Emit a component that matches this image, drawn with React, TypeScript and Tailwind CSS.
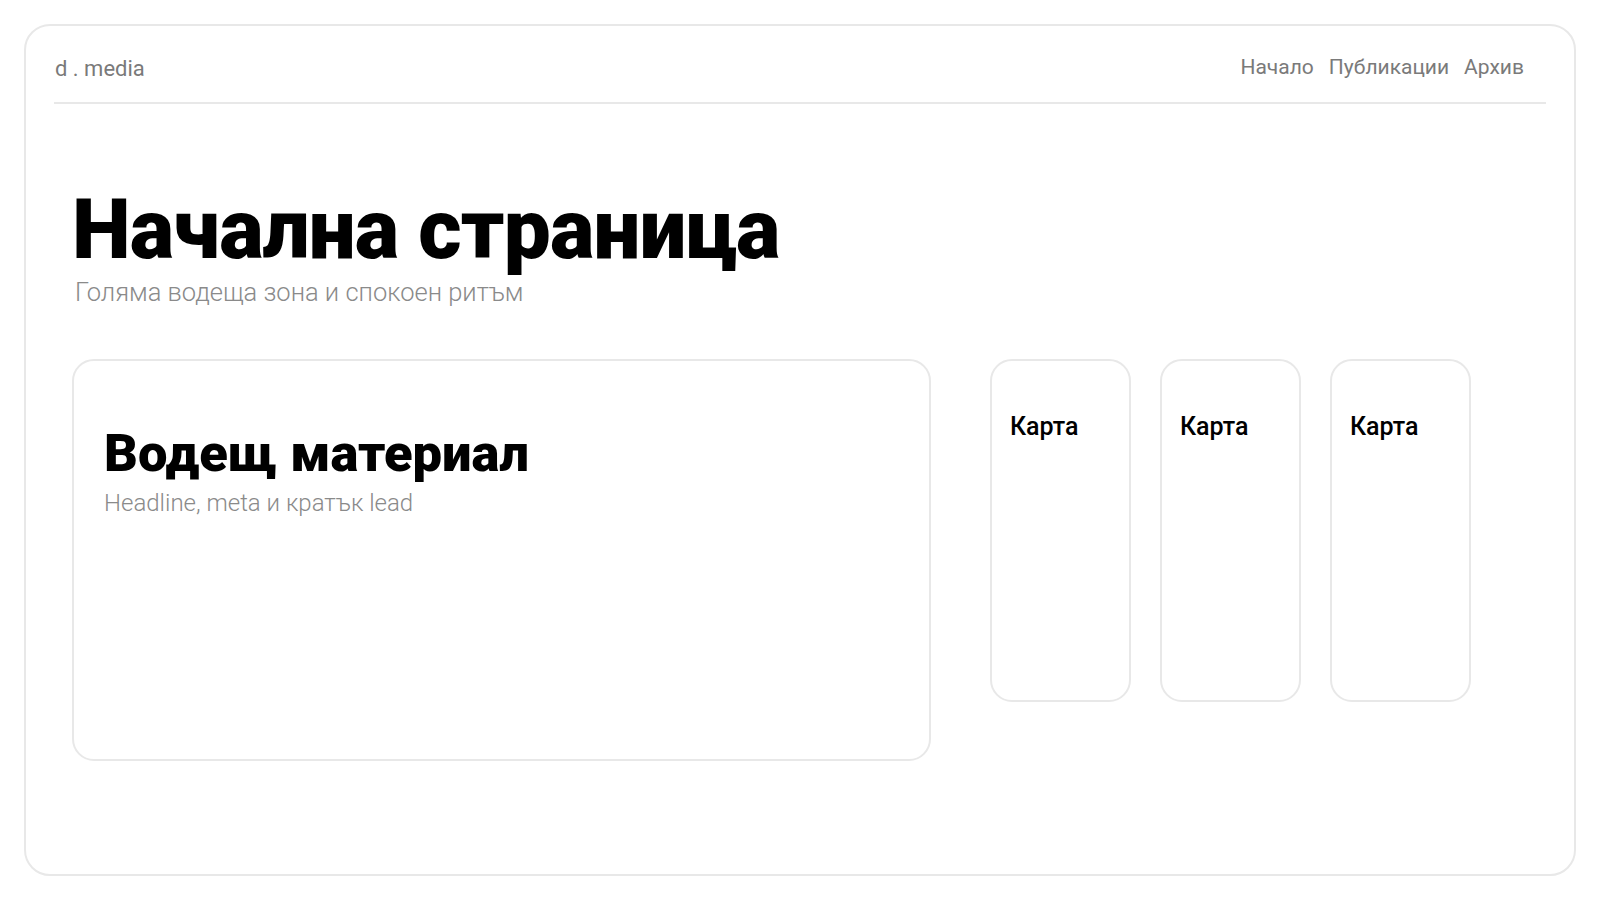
import React from 'react';

const App: React.FC = () => {
  const navItems = ['Начало', 'Публикации', 'Архив'];
  const cards = ['Карта', 'Карта', 'Карта'];

  return (
    <div className="w-full h-[900px] bg-white p-6 font-['Roboto','Noto_Sans',sans-serif]">
      <div className="h-full w-full rounded-[26px] border-2 border-[#e8e8e8] px-[28px] flex flex-col">
        {/* header */}
        <header className="h-[78px] pt-[8px] flex items-center justify-between border-b-2 border-[#e8e8e8] pr-[22px]">
          <div className="pl-px text-[22px] text-[#7a7a7a]">d . media</div>
          <nav className="flex gap-[15px] text-[21px] text-[#7a7a7a]">
            {navItems.map((item) => (
              <a key={item} href="#" className="hover:text-black">
                {item}
              </a>
            ))}
          </nav>
        </header>

        {/* hero */}
        <main className="px-[18px] pt-[84px]">
          <h1 className="text-[83.5px] leading-[84px] font-black text-black tracking-[-0.01em]">Начална страница</h1>
          <p className="mt-[5px] pl-[3px] text-[25.5px] leading-[30px] text-[#8a8a8a] font-light">
            Голяма водеща зона и спокоен ритъм
          </p>

          <div className="mt-[52px] flex items-start">
            <section className="w-[859px] h-[402px] rounded-[22px] border-2 border-[#e8e8e8] px-[30px] pt-[63px]">
              <h2 className="text-[52.5px] leading-[58px] font-black text-black">Водещ материал</h2>
              <p className="mt-[7px] text-[24px] leading-[28px] text-[#8a8a8a] font-light">
                Headline, meta и кратък lead
              </p>
            </section>

            <div className="ml-[59px] flex gap-[29px]">
              {cards.map((c, i) => (
                <div
                  key={i}
                  className="w-[141px] h-[343px] rounded-[22px] border-2 border-[#e8e8e8] px-[18px] pt-[52px]"
                >
                  <div className="text-[25px] leading-[28px] font-medium text-black">{c}</div>
                </div>
              ))}
            </div>
          </div>
        </main>
      </div>
    </div>
  );
};

export default App;
